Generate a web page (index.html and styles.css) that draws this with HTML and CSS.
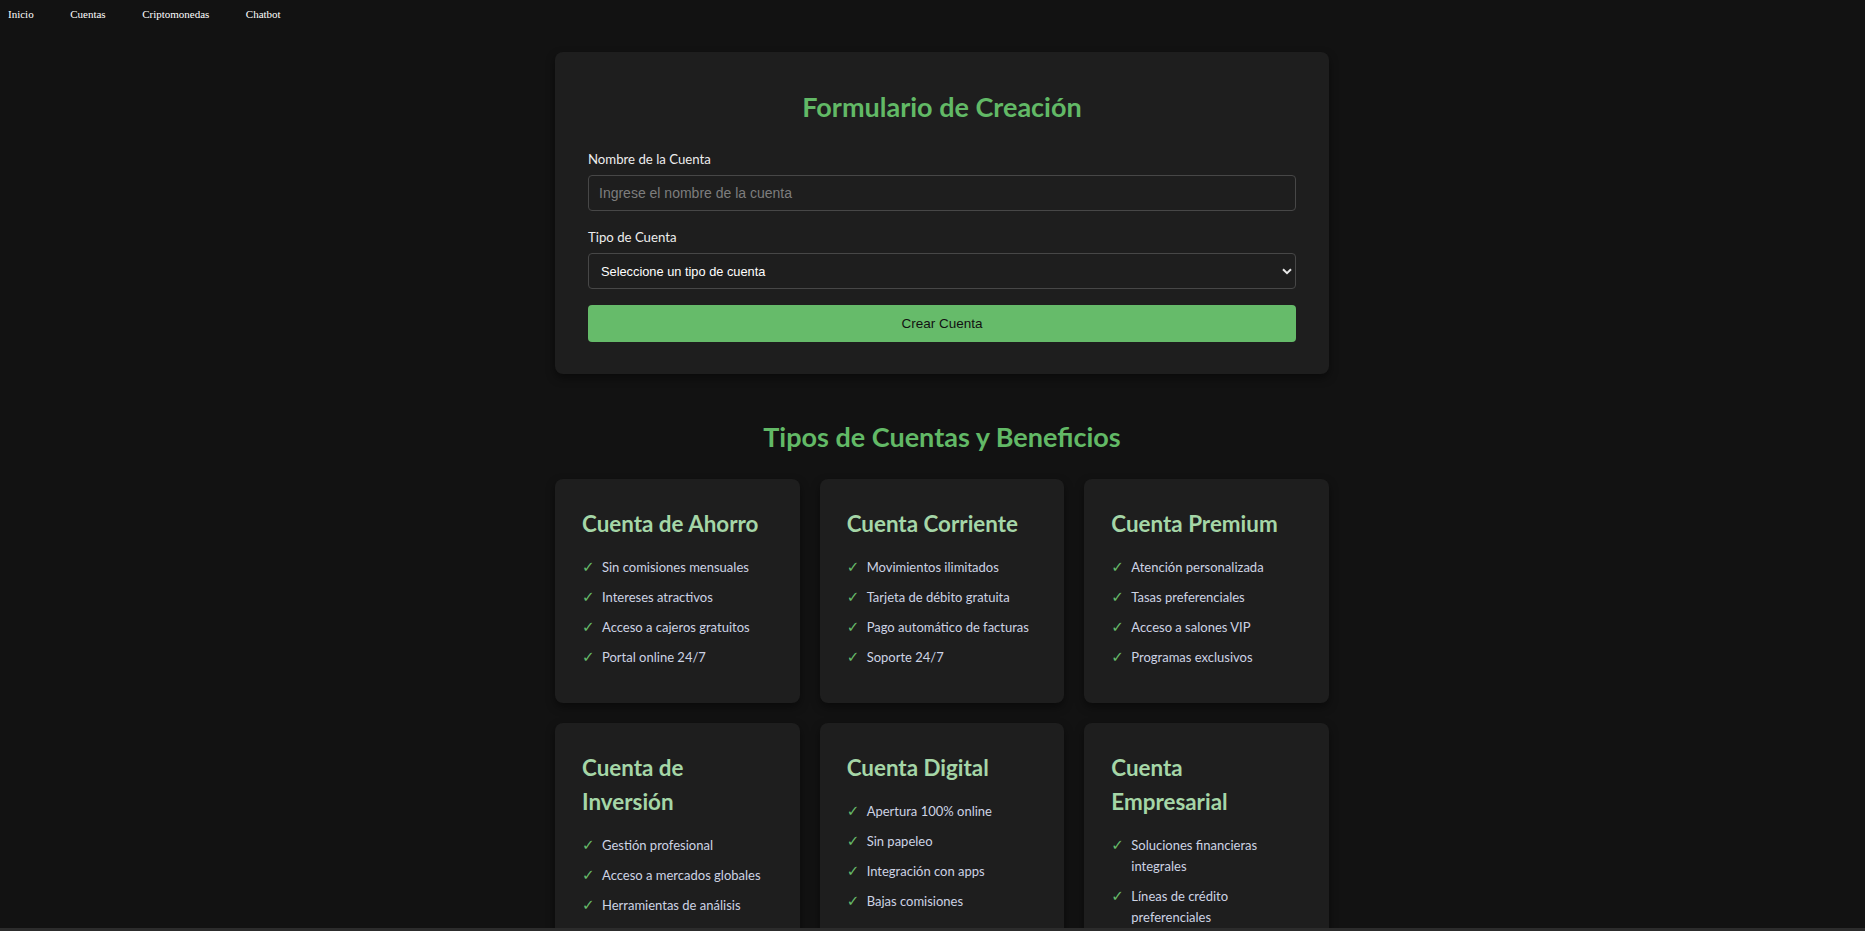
FILE: index.html
```html
<!DOCTYPE html>
<html lang="es">
<head>
<meta charset="utf-8">
<title>Cuentas</title>
<link rel="stylesheet" href="styles.css">
</head>
<body>
<nav class="topnav">
  <ul class="topnav-list">
    <li><a href="#">Inicio</a></li>
    <li><a href="#">Cuentas</a></li>
    <li><a href="#">Criptomonedas</a></li>
    <li><a href="#">Chatbot</a></li>
  </ul>
</nav>
<main class="page">
  <div class="container">
    <section class="form-card">
      <h2 class="form-title">Formulario de Creación</h2>
      <form class="form">
        <div class="field">
          <label class="field-label" for="nombre">Nombre de la Cuenta</label>
          <input class="field-input" id="nombre" type="text" placeholder="Ingrese el nombre de la cuenta">
        </div>
        <div class="field">
          <label class="field-label" for="tipo">Tipo de Cuenta</label>
          <div class="select-wrap">
            <select class="field-input field-select" id="tipo">
              <option>Seleccione un tipo de cuenta</option>
              <option>Cuenta de Ahorro</option>
              <option>Cuenta Corriente</option>
              <option>Cuenta Premium</option>
            </select>
            <svg class="select-arrow" width="10" height="7" viewBox="0 0 10 7"><path d="M1 1.2 L5 5.2 L9 1.2" fill="none" stroke="#e8e8e8" stroke-width="2"/></svg>
          </div>
        </div>
        <button class="btn" type="button">Crear Cuenta</button>
      </form>
    </section>

    <section class="types">
      <h2 class="section-title">Tipos de Cuentas y Beneficios</h2>
      <div class="grid">
        <article class="card">
          <h3 class="card-title">Cuenta de Ahorro</h3>
          <ul class="benefits">
            <li>Sin comisiones mensuales</li>
            <li>Intereses atractivos</li>
            <li>Acceso a cajeros gratuitos</li>
            <li>Portal online 24/7</li>
          </ul>
        </article>
        <article class="card">
          <h3 class="card-title">Cuenta Corriente</h3>
          <ul class="benefits">
            <li>Movimientos ilimitados</li>
            <li>Tarjeta de débito gratuita</li>
            <li>Pago automático de facturas</li>
            <li>Soporte 24/7</li>
          </ul>
        </article>
        <article class="card">
          <h3 class="card-title">Cuenta Premium</h3>
          <ul class="benefits">
            <li>Atención personalizada</li>
            <li>Tasas preferenciales</li>
            <li>Acceso a salones VIP</li>
            <li>Programas exclusivos</li>
          </ul>
        </article>
        <article class="card">
          <h3 class="card-title">Cuenta de Inversión</h3>
          <ul class="benefits">
            <li>Gestión profesional</li>
            <li>Acceso a mercados globales</li>
            <li>Herramientas de análisis</li>
            <li>Asesoría especializada</li>
          </ul>
        </article>
        <article class="card">
          <h3 class="card-title">Cuenta Digital</h3>
          <ul class="benefits">
            <li>Apertura 100% online</li>
            <li>Sin papeleo</li>
            <li>Integración con apps</li>
            <li>Bajas comisiones</li>
          </ul>
        </article>
        <article class="card">
          <h3 class="card-title">Cuenta Empresarial</h3>
          <ul class="benefits">
            <li>Soluciones financieras integrales</li>
            <li>Líneas de crédito preferenciales</li>
            <li>Gestión de nómina</li>
            <li>Asesoría empresarial</li>
          </ul>
        </article>
      </div>
    </section>
  </div>
</main>
<div class="bottom-bar"></div>
</body>
</html>
```

FILE: styles.css
```css
* { box-sizing: border-box; }

html, body {
  margin: 0;
  padding: 0;
  background: #121212;
}

body {
  font-family: Lato, "Open Sans", sans-serif;
  color: #e0e0e0;
}

/* top navigation */
.topnav {
  height: 28px;
}
.topnav-list {
  list-style: none;
  margin: 0;
  padding: 0 0 0 8px;
  display: flex;
  gap: 36.5px;
  height: 28px;
  align-items: center;
  font-size: 11px;
  line-height: 14px;
}
.topnav-list li {
  font-size: 11px;
  line-height: 14px;
}
.topnav-list a {
  font-family: "Liberation Serif", serif;
  font-size: 11px;
  line-height: 14px;
  color: #ffffff;
  text-decoration: none;
}

/* page */
.page {
  padding: 24px 0 0 19px;
}
.container {
  width: 774px;
  margin: 0 auto;
}

/* form card */
.form-card {
  background: #1e1e1e;
  border-radius: 8px;
  padding: 33px 33px 32px;
  box-shadow: 0 4px 10px rgba(0, 0, 0, 0.45);
  margin-bottom: 46px;
}
.form-title {
  margin: 0 0 20px;
  text-align: center;
  font-size: 27px;
  line-height: 44px;
  font-weight: 700;
  color: #62b966;
}
.field {
  margin-bottom: 16px;
}
.field-label {
  display: block;
  font-size: 13.2px;
  line-height: 20px;
  color: #ededed;
  margin-bottom: 6px;
}
.field-input {
  display: block;
  width: 100%;
  height: 36px;
  padding: 0 10px;
  background: #1e1e1e;
  border: 1px solid #474747;
  border-radius: 4px;
  color: #f2f2f2;
  font-family: "Liberation Sans", Arial, sans-serif;
  font-size: 14px;
  outline: none;
}
.field-input::placeholder {
  color: #7d7d7d;
}
.select-wrap {
  position: relative;
}
.field-select {
  appearance: none;
  -webkit-appearance: none;
  padding: 0 30px 0 12px;
  font-size: 12.8px;
  color: #ffffff;
}
.select-arrow {
  position: absolute;
  right: 4px;
  top: 15px;
  pointer-events: none;
}
.btn {
  display: block;
  width: 100%;
  height: 37px;
  border: none;
  border-radius: 4px;
  background: #66bb6a;
  color: #111111;
  font-family: "Liberation Sans", Arial, sans-serif;
  font-size: 13.5px;
  cursor: pointer;
}

/* account types */
.section-title {
  margin: 0 0 25px;
  text-align: center;
  font-size: 27px;
  line-height: 34px;
  font-weight: 700;
  color: #62b966;
}
.grid {
  display: grid;
  grid-template-columns: repeat(3, 1fr);
  gap: 20px;
}
.card {
  background: #1e1e1e;
  border-radius: 8px;
  padding: 28px 24px 31px 27px;
  box-shadow: 0 4px 10px rgba(0, 0, 0, 0.45);
}
.card-title {
  margin: 0 6px 11px 0;
  font-size: 22.4px;
  line-height: 34px;
  font-weight: 700;
  color: #a5d6a7;
}
.benefits {
  list-style: none;
  margin: 0;
  padding: 0;
}
.benefits li {
  display: flex;
  font-size: 13px;
  line-height: 21px;
  padding: 4.5px 0;
  color: #cdd3e4;
}
.benefits li::before {
  content: "\2713";
  flex: 0 0 20px;
  color: #66bb6a;
  font-family: "DejaVu Sans", sans-serif;
  font-size: 15px;
}

.bottom-bar {
  position: fixed;
  left: 0;
  right: 0;
  bottom: 0;
  height: 3px;
  background: #2c2c2c;
}
```
